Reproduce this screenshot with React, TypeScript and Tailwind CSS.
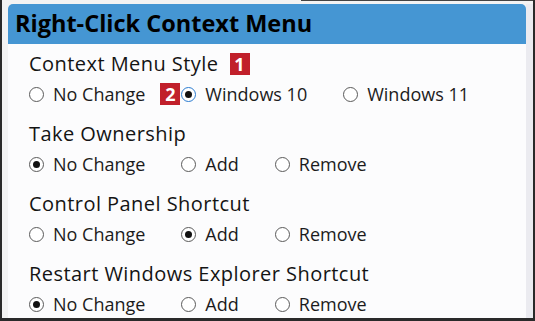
import React from 'react'

type Opt = { label: string; checked?: boolean; focus?: boolean; badge?: string }

const sections: { title: string; badge?: string; options: Opt[] }[] = [
  {
    title: 'Context Menu Style',
    badge: '1',
    options: [
      { label: 'No Change' },
      { label: 'Windows 10', checked: true, focus: true, badge: '2' },
      { label: 'Windows 11' },
    ],
  },
  {
    title: 'Take Ownership',
    options: [{ label: 'No Change', checked: true }, { label: 'Add' }, { label: 'Remove' }],
  },
  {
    title: 'Control Panel Shortcut',
    options: [{ label: 'No Change' }, { label: 'Add', checked: true }, { label: 'Remove' }],
  },
  {
    title: 'Restart Windows Explorer Shortcut',
    options: [{ label: 'No Change', checked: true }, { label: 'Add' }, { label: 'Remove' }],
  },
]

function Badge({ n }: { n: string }) {
  return (
    <span className="flex h-[22px] w-[20px] items-center justify-center bg-[#c1202b] text-[18px] font-bold leading-none text-white">
      {n}
    </span>
  )
}

function Radio({ opt }: { opt: Opt }) {
  return (
    <div className="relative flex h-[24px] items-center gap-[9px]">
      {opt.badge && (
        <div className="absolute left-[-21px] top-[1px]">
          <Badge n={opt.badge} />
        </div>
      )}
      <span
        className={
          'flex h-[15px] w-[15px] items-center justify-center rounded-full border bg-white ' +
          (opt.focus ? 'border-[#2a7bd0]' : 'border-[#5a5a5a]')
        }
      >
        {opt.checked && <span className="h-[7px] w-[7px] rounded-full bg-[#111]" />}
      </span>
      <span className="text-[18px] leading-none text-[#1b1b1b]">{opt.label}</span>
    </div>
  )
}

export default function App() {
  return (
    <div
      className="relative flex h-[321px] w-[535px] overflow-hidden border-b-[3px] border-l-2 border-r-2 border-[#2a2a2a] bg-[#f3f3f3] pl-[6px] pt-[4px]"
      style={{ fontFamily: '"Open Sans", "Noto Sans", sans-serif' }}
    >
      {/* stray window edge at the top */}
      <div className="absolute right-0 top-0 h-px w-[232px] bg-[#444]" />

      <div className="flex flex-1 flex-col">
        {/* Header */}
        <div className="flex h-[40px] items-center rounded-t-[5px] bg-[#4596d3] px-[7px]">
          <h1 className="text-[23.5px] font-bold text-black">Right-Click Context Menu</h1>
        </div>

        {/* Options */}
        <div className="flex flex-1 flex-col gap-[16px] bg-[#fcfcfd] pl-[21px] pt-[8px]">
          {sections.map((s) => (
            <div key={s.title} className="flex flex-col gap-[6px]">
              <div className="flex h-[24px] items-center gap-[11px]">
                <span className="text-[20px] font-medium leading-none tracking-[0.45px] text-[#141414]">{s.title}</span>
                {s.badge && <Badge n={s.badge} />}
              </div>
              <div className="flex items-center gap-[36px]">
                {s.options.map((o) => (
                  <Radio key={o.label} opt={o} />
                ))}
              </div>
            </div>
          ))}
        </div>
      </div>

      {/* scrollbar track */}
      <div className="w-[7px] bg-[#ebebf0]" />
    </div>
  )
}
